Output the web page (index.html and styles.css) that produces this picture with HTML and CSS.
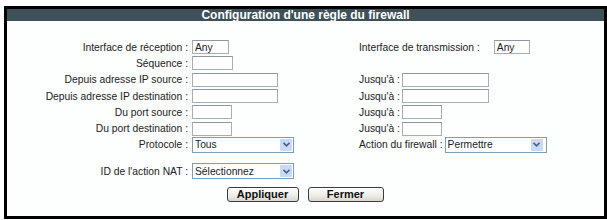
FILE: index.html
```html
<!DOCTYPE html>
<html lang="fr">
<head>
    <meta charset="UTF-8">
    <title>Configuration d'une règle du firewall</title>
    <link rel="stylesheet" href="styles.css">
</head>
<body>
    <div class="panel">
        <div class="panel-title">Configuration d'une règle du firewall</div>
        <form class="rule-form">
            <div class="rule-grid">
                <label class="lbl">Interface de réception :</label>
                <div class="fld"><input type="text" class="in-any" value="Any"></div>
                <div class="rfld wide-gap"><span>Interface de transmission :</span><input type="text" class="in-any2" value="Any"></div>

                <label class="lbl">Séquence :</label>
                <div class="fld"><input type="text" class="in-seq"></div>
                <div class="rfld"></div>

                <label class="lbl">Depuis adresse IP source :</label>
                <div class="fld"><input type="text" class="in-ip"></div>
                <div class="rfld"><span>Jusqu'à :</span><input type="text" class="in-ip2"></div>

                <label class="lbl">Depuis adresse IP destination :</label>
                <div class="fld"><input type="text" class="in-ip"></div>
                <div class="rfld"><span>Jusqu'à :</span><input type="text" class="in-ip2"></div>

                <label class="lbl">Du port source :</label>
                <div class="fld"><input type="text" class="in-port"></div>
                <div class="rfld"><span>Jusqu'à :</span><input type="text" class="in-port"></div>

                <label class="lbl">Du port destination :</label>
                <div class="fld"><input type="text" class="in-port"></div>
                <div class="rfld"><span>Jusqu'à :</span><input type="text" class="in-port"></div>

                <label class="lbl">Protocole :</label>
                <div class="fld">
                    <span class="select-wrap">
                        <select><option>Tous</option><option>TCP</option><option>UDP</option></select>
                        <span class="select-arrow"><svg width="7" height="5" viewBox="0 0 7 5"><path d="M0.5 0.8 L3.5 3.8 L6.5 0.8" fill="none" stroke="#4d6185" stroke-width="1.6"/></svg></span>
                    </span>
                </div>
                <div class="rfld">
                    <span>Action du firewall :</span>
                    <span class="select-wrap">
                        <select><option>Permettre</option><option>Refuser</option></select>
                        <span class="select-arrow"><svg width="7" height="5" viewBox="0 0 7 5"><path d="M0.5 0.8 L3.5 3.8 L6.5 0.8" fill="none" stroke="#4d6185" stroke-width="1.6"/></svg></span>
                    </span>
                </div>
            </div>

            <div class="rule-grid nat-row">
                <label class="lbl">ID de l'action NAT :</label>
                <div class="fld">
                    <span class="select-wrap">
                        <select><option>Sélectionnez</option></select>
                        <span class="select-arrow"><svg width="7" height="5" viewBox="0 0 7 5"><path d="M0.5 0.8 L3.5 3.8 L6.5 0.8" fill="none" stroke="#4d6185" stroke-width="1.6"/></svg></span>
                    </span>
                </div>
                <div class="rfld"></div>
            </div>

            <div class="buttons">
                <button type="button" class="btn btn-apply">Appliquer</button>
                <button type="button" class="btn btn-close">Fermer</button>
            </div>
        </form>
    </div>
</body>
</html>
```

FILE: styles.css
```css
body {
    margin: 0;
    background: #fff;
    font-family: "Liberation Sans", Arial, sans-serif;
    font-size: 10.3px;
    color: #222;
}
.panel {
    box-sizing: border-box;
    margin: 6px 0 0 4px;
    width: 603px;
    height: 213px;
    border: 3px solid #000;
    background: #fdfefe;
}
.panel-title {
    height: 12px;
    line-height: 12px;
    background: #3e5159;
    color: #fff;
    font-size: 12px;
    font-weight: bold;
    text-align: center;
}
.rule-form {
    padding-top: 18px;
}
.rule-grid {
    display: grid;
    grid-template-columns: 185px 167px auto;
    grid-auto-rows: 16.3px;
    align-items: center;
}
.lbl {
    text-align: right;
    padding-right: 4px;
    white-space: nowrap;
}
.fld, .rfld {
    display: flex;
    align-items: center;
    white-space: nowrap;
}
.rfld span {
    margin-right: 2px;
}
.rfld.wide-gap span {
    margin-right: 14px;
}
input[type="text"] {
    box-sizing: border-box;
    height: 14px;
    margin: 0;
    padding: 0 2px;
    border: 1px solid #a7aeb4;
    border-top-color: #8f979e;
    background: #fff;
    font-family: inherit;
    font-size: 10.3px;
    color: #222;
}
.in-any { width: 37px; }
.in-any2 { width: 36px; }
.in-seq { width: 41px; }
.in-ip { width: 86px; }
.in-ip2 { width: 87px; }
.in-port { width: 40px; }
.select-wrap {
    position: relative;
    display: inline-block;
    height: 16px;
}
select {
    box-sizing: border-box;
    appearance: none;
    -webkit-appearance: none;
    width: 102px;
    height: 16px;
    margin: 0;
    padding: 0 2px;
    border: 1px solid #7f9db9;
    border-radius: 0;
    background: #fff;
    font-family: inherit;
    font-size: 10.3px;
    color: #222;
}
.select-arrow {
    position: absolute;
    top: 2px;
    right: 2px;
    width: 12px;
    height: 12px;
    background: #c9daf6;
    border-radius: 1px;
    display: flex;
    align-items: center;
    justify-content: center;
    pointer-events: none;
}
.nat-row {
    margin-top: 10px;
}
.buttons {
    display: flex;
    justify-content: center;
    gap: 9px;
    margin-top: 8px;
    padding-right: 1px;
}
.btn {
    box-sizing: border-box;
    height: 15px;
    padding: 0;
    border: 1px solid #3c3c3c;
    border-radius: 3px;
    background: linear-gradient(#ffffff, #ecebe6 60%, #d8d6cc);
    font-family: "Liberation Sans", Arial, sans-serif;
    font-size: 11px;
    font-weight: bold;
    color: #111;
    line-height: 13px;
    cursor: pointer;
}
.btn-apply { width: 72px; }
.btn-close { width: 76px; }
```
